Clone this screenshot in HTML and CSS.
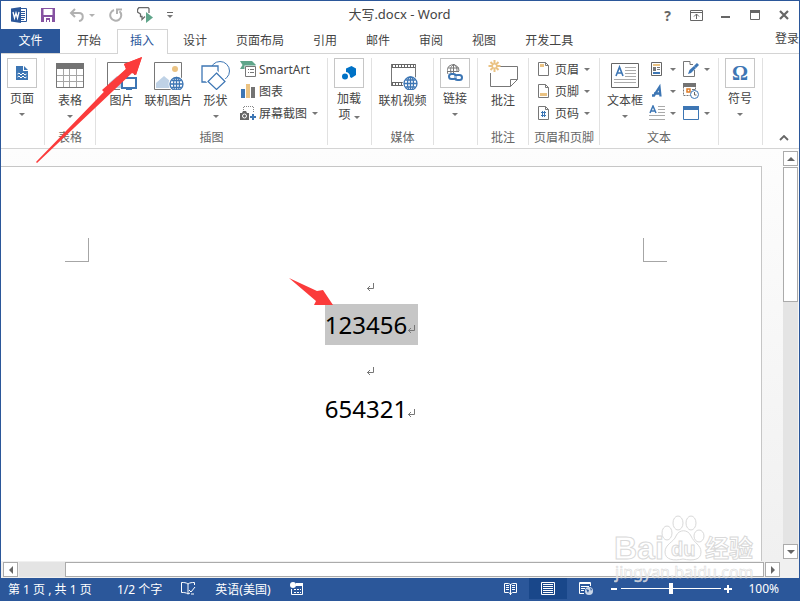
FILE: index.html
```html
<!DOCTYPE html>
<html lang="zh-CN">
<head>
  <meta charset="UTF-8" />
  <title>大写.docx - Word</title>
  <link rel="stylesheet" href="styles.css">
</head>
<body>
<div class="window">

  <header class="titlebar">
    <div class="quick-access">
      <svg class="word-logo" width="16" height="16" viewBox="0 0 16 16">
        <path d="M9 1.5h6.5v13H9z" fill="#fff" stroke="#2b579a"/>
        <path d="M10 4.5h4M10 6.5h4M10 8.5h4M10 10.5h4M10 12.5h3" stroke="#2b579a"/>
        <path d="M0 1.5L10 0v16L0 14.500z" fill="#2b579a"/>
        <path d="M2 5l1.500 6L5 6l1.500 5L8 5" fill="none" stroke="#fff" stroke-width="1.300"/>
      </svg>
      <button class="qat" aria-label="保存">
        <svg width="14" height="14" viewBox="0 0 14 14">
          <path d="M0 0h14v14H0z" fill="#8652a1"/>
          <path d="M2.500 1h9v6h-9zM3 9h8v5H3z" fill="#fff"/>
          <path d="M5 10h4v4H8v-2H6v2H5z" fill="#8652a1"/>
        </svg>
      </button>
      <button class="qat undo" aria-label="撤消">
        <svg width="16" height="14" viewBox="0 0 16 14">
          <path d="M2 5h8c5 0 5 7 0 8" fill="none" stroke="#b1b1b1" stroke-width="2"/>
          <path d="M6 1L2 5l4 4" fill="none" stroke="#b1b1b1" stroke-width="2"/>
        </svg>
        <span class="caret pale"></span>
      </button>
      <button class="qat" aria-label="重复">
        <svg width="14" height="14" viewBox="0 0 14 14">
          <path d="M5 2a5.500 5.500 0 1 0 5.500 1.200" fill="none" stroke="#b1b1b1" stroke-width="2"/>
          <path d="M8 6V1.500h5" fill="none" stroke="#b1b1b1" stroke-width="2"/>
        </svg>
      </button>
      <button class="qat" aria-label="触摸">
        <svg width="16" height="16" viewBox="0 0 16 16">
          <path d="M8 9.500l-3 3v-3H3.500v-2.500L.5 5V2.500l1.500-2h9l1 1V6" fill="none" stroke="#6a6a6a" stroke-width="1.300"/>
          <path d="M9 5l7 5.500L9 16z" fill="#5fa58a"/>
        </svg>
      </button>
      <button class="qat customize" aria-label="自定义快速访问工具栏">
        <span class="bar"></span><span class="caret"></span>
      </button>
    </div>
    <h1 class="doc-title">大写.docx - Word</h1>
    <div class="window-controls">
      <button aria-label="帮助" class="help">?</button>
      <button aria-label="功能区显示选项">
        <svg width="13" height="11" viewBox="0 0 13 11"><path d="M.5.5h12v10H.5zM0 2.500h13M6.500 9V4M4 6.500L6.500 4 9 6.500" fill="none" stroke="#666"/></svg>
      </button>
      <button aria-label="最小化">
        <svg width="10" height="10" viewBox="0 0 10 10"><path d="M0 6h9v2H0z" fill="#666"/></svg>
      </button>
      <button aria-label="最大化">
        <svg width="10" height="10" viewBox="0 0 10 10"><path d="M.5.500h9v9h-9z" fill="none" stroke="#666"/><path d="M0 0h10v3H0z" fill="#666"/></svg>
      </button>
      <button aria-label="关闭">
        <svg width="10" height="10" viewBox="0 0 10 10"><path d="M1 1l8 8M9 1L1 9" stroke="#666" stroke-width="2.200"/></svg>
      </button>
    </div>
  </header>

  <nav class="tabs">
    <a href="#" class="file-tab">文件</a>
    <a href="#" class="tab">开始</a>
    <a href="#" class="tab active">插入</a>
    <a href="#" class="tab">设计</a>
    <a href="#" class="tab">页面布局</a>
    <a href="#" class="tab">引用</a>
    <a href="#" class="tab">邮件</a>
    <a href="#" class="tab">审阅</a>
    <a href="#" class="tab">视图</a>
    <a href="#" class="tab">开发工具</a>
    <a href="#" class="login">登录</a>
  </nav>

  <section class="ribbon">
    <div class="group g-small">
      <div class="group-body">
        <button class="big">
          <span class="frame">
            <svg width="12" height="14" viewBox="0 0 12 14">
              <path d="M0 0h7v5h5v9H0zM8 0l4 4H8z" fill="#3d76b4"/>
              <path d="M1.500 8l1.500-1 2 2 2-2 2 2 1.500-1M1.500 11l1.500-1 2 2 2-2 2 2 1.500-1" fill="none" stroke="#fff"/>
            </svg>
          </span>
          <span>页面</span>
          <i class="caret"></i>
        </button>
      </div>
    </div>

    <div class="group g-medium">
      <div class="group-body">
        <button class="big">
          <svg class="icon" width="30" height="32" viewBox="0 0 30 32">
            <path d="M1 5h28v25H1z" fill="#fff"/>
            <path d="M1.500 12v17.500h27V12M1 17.500h28M1 23.500h28M8.500 11v19M14.500 11v19M21.500 11v19" fill="none" stroke="#a6a6a6"/>
            <path d="M1.500 5v24.500h27V5" fill="none" stroke="#777"/>
            <path d="M1 5h28v6H1z" fill="#737373"/>
          </svg>
          <span>表格</span>
          <i class="caret"></i>
        </button>
      </div>
      <div class="group-label">表格</div>
    </div>

    <div class="group g-illustrations">
      <div class="group-body">
        <button class="big">
          <svg class="icon" width="30" height="32" viewBox="0 0 30 32">
            <path d="M13 31.500H.5v-27h27V17" fill="#fff" stroke="#777"/>
            <path d="M2 30v-5l8-7 5 4v8z" fill="#bfd2e6"/>
            <path d="M15 20h14v10H15z" fill="#fff" stroke="#3d76b4" stroke-width="2"/>
            <path d="M22 30v2M19 32h6" stroke="#3d76b4" stroke-width="2"/>
          </svg>
          <span>图片</span>
        </button>
        <button class="big">
          <svg class="icon" width="30" height="32" viewBox="0 0 30 32">
            <path d="M.5 4.500h27v27H.5z" fill="#fff" stroke="#777"/>
            <circle cx="21" cy="11" r="3" fill="#eac282"/>
            <path d="M2 30v-5l8-7 6 5v7z" fill="#bfd2e6"/>
            <circle cx="22.500" cy="26" r="8" fill="#fff"/>
            <g fill="none" stroke="#3d76b4" stroke-width="1.300"><circle cx="22.500" cy="26" r="6.500"/><ellipse cx="22.500" cy="26" rx="3" ry="6.500"/><path d="M22.500 19.500v13M16 26h13M17.500 22.500h10M17.500 29.500h10"/></g>
          </svg>
          <span>联机图片</span>
        </button>
        <button class="big">
          <svg class="icon" width="30" height="32" viewBox="0 0 30 32">
            <circle cx="19" cy="13" r="9.500" fill="#fff" stroke="#3d76b4"/>
            <path d="M1 8h16v16H1z" fill="#fff" stroke="#3d76b4" stroke-width="1.300"/>
            <path d="M15.500 14l9 9-9 9-9-9z" fill="#fff" stroke="#fff" stroke-width="3"/>
            <path d="M15.500 15l8.500 8.500-8.500 8-8.500-8z" fill="#fff" stroke="#3d76b4" stroke-width="1.200"/>
          </svg>
          <span>形状</span>
          <i class="caret"></i>
        </button>
        <div class="rows">
          <button class="row">
            <svg width="16" height="16" viewBox="0 0 16 16">
              <path d="M0 0h12l4 4-3 4H0l2.500-4z" fill="#5fa58a"/>
              <path d="M5.500 5.500h10v10h-10z" fill="#fff" stroke="#fff" stroke-width="2"/>
              <path d="M5.500 5.500h10v10h-10z" fill="#fff" stroke="#777"/>
              <path d="M8 8.500h1M10 8.500h4M8 11.500h1M10 11.500h4" stroke="#777"/>
            </svg>
            SmartArt
          </button>
          <button class="row">
            <svg width="16" height="16" viewBox="0 0 16 16">
              <path d="M1 6h4v9H1z" fill="#3d76b4"/><path d="M6 1h4v14H6z" fill="#eac282"/><path d="M11 4h4v11h-4z" fill="#737373"/>
            </svg>
            图表
          </button>
          <button class="row">
            <svg width="16" height="16" viewBox="0 0 16 16">
              <path d="M3.500 5V1.500h10V8" fill="none" stroke="#888" stroke-dasharray="1 1"/>
              <path d="M0 8h2l1-2h3l1 2h2v7H0z" fill="#666"/>
              <circle cx="4.500" cy="11" r="2" fill="none" stroke="#fff"/>
              <path d="M13 9v6M10 12h6" stroke="#3d76b4" stroke-width="2"/>
            </svg>
            屏幕截图 <i class="caret"></i>
          </button>
        </div>
      </div>
      <div class="group-label">插图</div>
    </div>

    <div class="group g-small">
      <div class="group-body">
        <button class="big">
          <span class="frame">
            <svg width="14" height="16" viewBox="0 0 14 16">
              <path d="M4 3.500L9.500 1 14 3.500V10l-4.500 3-1.500-1a5 5 0 0 0-4-5z" fill="#0072c6"/>
              <circle cx="3" cy="11.500" r="3" fill="#0072c6"/>
            </svg>
          </span>
          <span>加载</span>
          <span>项 <i class="caret"></i></span>
        </button>
      </div>
    </div>

    <div class="group g-media">
      <div class="group-body">
        <button class="big">
          <svg class="icon" width="30" height="32" viewBox="0 0 30 32">
            <path d="M3 6h25v22H3z" fill="#fff"/>
            <path d="M3 6h25v4H3zM3 24h13v4H3z" fill="#666"/>
            <path d="M5 8h22M5 26h10" stroke="#fff" stroke-width="2" stroke-dasharray="2 1"/>
            <path d="M3.500 6v22M27.500 6v14" stroke="#777"/>
            <circle cx="22.500" cy="25.500" r="8" fill="#fff"/>
            <g fill="none" stroke="#3d76b4" stroke-width="1.300"><circle cx="22.500" cy="25.500" r="6.500"/><ellipse cx="22.500" cy="25.500" rx="3" ry="6.500"/><path d="M22.500 19v13M16 25.500h13M17.500 22h10M17.500 29h10"/></g>
          </svg>
          <span>联机视频</span>
        </button>
      </div>
      <div class="group-label">媒体</div>
    </div>

    <div class="group g-small">
      <div class="group-body">
        <button class="big">
          <span class="frame">
            <svg width="16" height="18" viewBox="0 0 16 18">
              <g fill="none" stroke="#777"><path d="M1 10a6 6 0 1 1 11-3M4 9c-1-5 0-7 3-8.500C9.500 2 10 4 10 7M6.500 0v9M1 4h11M0 7.500h12"/></g>
              <g fill="none" stroke="#3d76b4" stroke-width="2"><rect x="2" y="10" width="7" height="5" rx="2.500"/><rect x="8" y="11" width="7" height="5" rx="2.500"/></g>
              <path d="M6 13h5" stroke="#fff"/>
            </svg>
          </span>
          <span>链接</span>
          <i class="caret"></i>
        </button>
      </div>
    </div>

    <div class="group g-medium">
      <div class="group-body">
        <button class="big">
          <svg class="icon" width="32" height="32" viewBox="0 0 32 32">
            <path d="M13 8.500h17.500v13l-7 7h-20V15" fill="none" stroke="#777"/>
            <path d="M30.500 21.500h-7v7" fill="none" stroke="#777"/>
            <path d="M7.500 2v12M1.500 8h12M3.500 4l8 8M11.500 4l-8 8" stroke="#eac282" stroke-width="2"/>
            <circle cx="7.500" cy="8" r="1.500" fill="#fff"/>
          </svg>
          <span>批注</span>
        </button>
      </div>
      <div class="group-label">批注</div>
    </div>

    <div class="group g-header">
      <div class="group-body">
        <div class="rows">
          <button class="row">
            <svg width="12" height="14" viewBox="0 0 12 14"><path d="M.5.500h7l3 3v10H.5z" fill="#fff" stroke="#777"/><path d="M7.500.500v3h3" fill="none" stroke="#777"/><path d="M2 2h4v3H2z" fill="#eac282"/></svg>
            页眉 <i class="caret"></i>
          </button>
          <button class="row">
            <svg width="12" height="14" viewBox="0 0 12 14"><path d="M.5.500h7l3 3v10H.5z" fill="#fff" stroke="#777"/><path d="M7.500.500v3h3" fill="none" stroke="#777"/><path d="M2 9h7v3H2z" fill="#eac282"/></svg>
            页脚 <i class="caret"></i>
          </button>
          <button class="row">
            <svg width="12" height="14" viewBox="0 0 12 14"><path d="M.5.500h7l3 3v10H.5z" fill="#fff" stroke="#777"/><path d="M7.500.500v3h3" fill="none" stroke="#777"/><path d="M4.500 5v6M6.500 5v6M3 6.500h5M3 9.500h5" stroke="#3d76b4"/></svg>
            页码 <i class="caret"></i>
          </button>
        </div>
      </div>
      <div class="group-label">页眉和页脚</div>
    </div>

    <div class="group g-text">
      <div class="group-body">
        <button class="big">
          <svg class="icon" width="28" height="32" viewBox="0 0 28 32">
            <path d="M.5 5.500h27v24H.5z" fill="#fff" stroke="#666"/>
            <path d="M5 18l3.500-9L12 18M6 15h5" fill="none" stroke="#3d76b4" stroke-width="1.600"/>
            <path d="M14 9.500h11M14 12.500h11M14 15.500h11M14 18.500h11M3 21.500h22M3 24.500h22" stroke="#aaa"/>
          </svg>
          <span>文本框</span>
          <i class="caret"></i>
        </button>
        <div class="rows narrow">
          <button class="row" aria-label="文档部件">
            <svg width="16" height="16" viewBox="0 0 16 16"><path d="M2.500 1.500h10v13h-10z" fill="#fff" stroke="#666"/><path d="M4 3h7v2H4z" fill="#eac282"/><path d="M4 6h3v4H4z" fill="#777"/><path d="M8 6.500h3M8 8.500h3" stroke="#777"/><path d="M4 11h7v2H4z" fill="#3d76b4"/></svg>
            <i class="caret"></i>
          </button>
          <button class="row" aria-label="艺术字">
            <svg width="16" height="16" viewBox="0 0 16 16"><path d="M3 12.500h2L10.500 4l1 9.500M5 10.500h6" fill="none" stroke="#3d76b4" stroke-width="2.300"/></svg>
            <i class="caret"></i>
          </button>
          <button class="row" aria-label="首字下沉">
            <svg width="16" height="16" viewBox="0 0 16 16"><path d="M1 8l3-7 3 7M2 6h4" fill="none" stroke="#3d76b4" stroke-width="1.500"/><path d="M9 1.500h7M9 4.500h7M9 7.500h7M0 10.500h16M0 14.500h16" stroke="#aaa"/></svg>
            <i class="caret"></i>
          </button>
        </div>
        <div class="rows narrow">
          <button class="row" aria-label="签名行">
            <svg width="16" height="16" viewBox="0 0 16 16"><path d="M7 .5H.5v15h11V9M7 .500v3h3" fill="none" stroke="#777"/><path d="M5 13l1.500-4 4.500-4 2 2-5 5z" fill="#3d76b4"/><path d="M12 6l3-3" stroke="#3d76b4" stroke-width="3"/></svg>
            <i class="caret"></i>
          </button>
          <button class="row" aria-label="日期和时间">
            <svg width="16" height="16" viewBox="0 0 16 16"><path d="M.5 1.500h12v11H.5z" fill="#fff" stroke="#777" stroke-dasharray="2 1"/><path d="M0 0h13v4H0z" fill="#737373"/><path d="M4 6h3v3H4z" fill="#fff" stroke="#e07b24" stroke-width="1.500"/><path d="M9 6.500h3" stroke="#777"/><circle cx="11.500" cy="11.500" r="4" fill="#fff" stroke="#3d76b4"/><path d="M11.500 9v3h2" fill="none" stroke="#666"/></svg>
          </button>
          <button class="row" aria-label="对象">
            <svg width="16" height="16" viewBox="0 0 16 16"><path d="M.5 1.500h15v13H.5z" fill="#fff" stroke="#3d76b4"/><path d="M0 1h16v4H0z" fill="#3d76b4"/></svg>
            <i class="caret"></i>
          </button>
        </div>
      </div>
      <div class="group-label">文本</div>
    </div>

    <div class="group g-small">
      <div class="group-body">
        <button class="big">
          <span class="frame omega">Ω</span>
          <span>符号</span>
          <i class="caret"></i>
        </button>
      </div>
    </div>

    <button class="collapse" aria-label="折叠功能区">
      <svg width="10" height="6" viewBox="0 0 10 6"><path d="M1 5l4-4 4 4" fill="none" stroke="#666" stroke-width="1.800"/></svg>
    </button>
  </section>

  <main class="workspace">
    <div class="canvas">
      <article class="page">
        <div class="margin-marks"><span class="mark-left"></span><span class="mark-right"></span></div>
        <p><svg class="pilcrow" width="11" height="9" viewBox="0 0 11 9"><path d="M7.500 0v5.500H1M4 3L1.500 5.500 4 8" fill="none" stroke="#777"/></svg></p>
        <p><span class="selected">123456<svg class="pilcrow" width="11" height="9" viewBox="0 0 11 9"><path d="M7.500 0v5.500H1M4 3L1.500 5.500 4 8" fill="none" stroke="#777"/></svg></span></p>
        <p><svg class="pilcrow" width="11" height="9" viewBox="0 0 11 9"><path d="M7.500 0v5.500H1M4 3L1.500 5.500 4 8" fill="none" stroke="#777"/></svg></p>
        <p>654321<svg class="pilcrow" width="11" height="9" viewBox="0 0 11 9"><path d="M7.500 0v5.500H1M4 3L1.500 5.500 4 8" fill="none" stroke="#777"/></svg></p>
      </article>
    </div>
    <div class="vscroll">
      <button class="scroll-btn" aria-label="向上滚动"><i class="caret up"></i></button>
      <div class="vthumb"></div>
      <div class="vtrack"></div>
      <button class="scroll-btn" aria-label="向下滚动"><i class="caret down"></i></button>
    </div>
  </main>

  <div class="hscroll">
    <button class="scroll-btn" aria-label="向左滚动"><i class="caret left"></i></button>
    <div class="htrack"></div>
    <div class="hthumb"></div>
    <button class="scroll-btn" aria-label="向右滚动"><i class="caret right"></i></button>
  </div>

  <svg class="arrow arrow-tab" width="108" height="108" viewBox="0 0 108 108">
    <path d="M106 1l-6 18-4-2L1 107l-1-1L90 13l-2-5z" fill="#fb3b3b"/>
    <path d="M106 1l-6 18-5-4-24 24-5-5L90 13l-2-5z" fill="#fb3b3b"/>
  </svg>
  <svg class="arrow arrow-text" width="46" height="28" viewBox="0 0 46 28">
    <path d="M0 0l28 13 6-1 10 15H25l2-4z" fill="#fb3b3b"/>
  </svg>

  <footer class="statusbar">
    <span class="page-count">第 1 页 , 共 1 页</span>
    <span>1/2 个字</span>
    <svg width="15" height="13" viewBox="0 0 15 13"><path d="M7 2v10M7 2C5 .5 3 .5.500.500v10C3 10.500 5 10.500 7 12l2-1M7 2C9 .5 11 .5 13.500.500V3M8 8l2 2 4-5M10 12h3" fill="none" stroke="#fff"/></svg>
    <span>英语(美国)</span>
    <svg class="macro" width="13" height="14" viewBox="0 0 13 14"><path d="M6 1h7v3H6z" fill="#fff"/><path d="M1.500 7v5.500h11V4" fill="none" stroke="#fff"/><path d="M4 7.500h7M4 10.500h7" stroke="#fff" stroke-dasharray="2 1"/><circle cx="3" cy="3" r="3" fill="#fff"/></svg>

    <div class="views">
      <button aria-label="阅读视图">
        <svg width="13" height="13" viewBox="0 0 13 13"><path d="M6.500 2v11M.5 1.500h4l2 1 2-1h4v9h-4l-2 1.500-2-1.500h-4zM2 3.500h3M2 5.500h3M2 7.500h3M8 3.500h3M8 5.500h3M8 7.500h3" fill="none" stroke="#fff"/></svg>
      </button>
      <button class="current" aria-label="页面视图">
        <svg width="14" height="13" viewBox="0 0 14 13"><path d="M.5.500h13v12H.5zM2 2.500h10M2 4.500h10M2 6.500h10M2 8.500h10M2 10.500h10" fill="none" stroke="#fff"/></svg>
      </button>
      <button aria-label="Web 版式视图">
        <svg width="14" height="13" viewBox="0 0 14 13"><path d="M5 11.500H.5V.500h11V4M0 1.500h12M2 4.500h8M2 6.500h4M2 8.500h3" fill="none" stroke="#fff"/><circle cx="10" cy="9" r="4" fill="#c9d6e8"/><path d="M7 7l3 1-1 3zM11 6l2 1-1 2z" fill="#2b579a"/></svg>
      </button>
    </div>
    <div class="zoom">
      <button aria-label="缩小"><svg width="8" height="8" viewBox="0 0 8 8"><path d="M1 4h6" stroke="#fff" stroke-width="2"/></svg></button>
      <input type="range" min="0" max="100" value="50" aria-label="缩放级别">
      <button aria-label="放大"><svg width="8" height="8" viewBox="0 0 8 8"><path d="M0 4h8M4 0v8" stroke="#fff" stroke-width="2"/></svg></button>
      <span class="percent">100%</span>
    </div>
  </footer>

  <svg class="watermark" width="146" height="72" viewBox="0 0 146 72">
    <g class="wm-outline">
      <text x="0" y="46" class="wm-latin">Bai</text>
      <path d="M51 39c0-8 9-10 11-16 3-7 12-7 15 0 3 7 10 9 10 16 0 8-8 9-18 7-9 2-18 1-18-7z"/>
      <ellipse cx="53" cy="20" rx="5" ry="7"/>
      <ellipse cx="64" cy="10" rx="5" ry="7"/>
      <ellipse cx="77" cy="10" rx="5" ry="7"/>
      <ellipse cx="85" cy="23" rx="5" ry="6"/>
      <text x="57" y="43" class="wm-du">du</text>
      <text x="91" y="44" class="wm-cjk">经验</text>
    </g>
    <text x="1" y="65" class="wm-url">jingyan.baidu.com</text>
  </svg>

</div>
</body>
</html>
```

FILE: styles.css
```css
* {
  box-sizing: border-box;
}

body {
  margin: 0;
  font-family: "Noto Sans", "Noto Sans CJK SC", sans-serif;
  font-size: 12px;
  color: #444;
  background: #fff;
}

button {
  font: inherit;
  color: inherit;
  background: none;
  border: none;
  padding: 0;
}

a {
  color: inherit;
  text-decoration: none;
}

svg {
  flex: none;
}

.window {
  position: relative;
  display: flex;
  flex-direction: column;
  height: 100vh;
  border: 1px solid #2b579a;
  border-bottom: none;
  overflow: hidden;
}

/* small drop-down triangle */
.caret {
  display: inline-block;
  flex: none;
  border: 3px solid transparent;
  border-top-color: #777;
  border-bottom: none;
}

.caret.pale {
  border-top-color: #b1b1b1;
}

/* title bar */
.titlebar {
  display: grid;
  grid-template-columns: 1fr auto 1fr;
  align-items: center;
  height: 28px;
  padding-right: 1px;
}

.quick-access {
  display: flex;
  align-items: center;
  gap: 14px;
  padding-left: 10px;
}

.qat {
  display: flex;
  align-items: center;
}

.undo {
  gap: 4px;
}

.customize {
  flex-direction: column;
  gap: 2px;
}

.customize .bar {
  width: 6px;
  height: 1px;
  background: #666;
}

.doc-title {
  height: 28px;
  margin: 0;
  font-size: 13px;
  font-weight: normal;
  line-height: 26px;
}

.window-controls {
  display: flex;
  justify-content: flex-end;
}

.window-controls button {
  display: flex;
  align-items: center;
  justify-content: center;
  width: 29px;
  height: 28px;
}

.window-controls .help {
  font-size: 14px;
  font-weight: bold;
  color: #666;
}

/* tabs */
.tabs {
  display: flex;
  gap: 2px;
  height: 25px;
  border-bottom: 1px solid #d4d4d4;
  line-height: 24px;
  white-space: nowrap;
}

.file-tab {
  width: 59px;
  margin-right: 2px;
  background: #2b579a;
  color: #fff;
  text-align: center;
}

.tab {
  height: 25px;
  padding: 0 13px 0 12px;
  border: 1px solid transparent;
  border-bottom: none;
  line-height: 22px;
}

.tab.active {
  border-color: #d4d4d4;
  background: #fff;
  color: #2b579a;
}

.login {
  margin-left: auto;
  line-height: 20px;
}

/* ribbon */
.ribbon {
  display: flex;
  height: 95px;
  padding: 4px 0 3px;
  border-bottom: 1px solid #d4d4d4;
  white-space: nowrap;
}

.group {
  display: flex;
  flex-direction: column;
  flex: none;
  border-right: 1px solid #e1e1e1;
}

.g-small {
  width: 44px;
}

.g-medium {
  width: 51px;
}

.g-illustrations {
  width: 232px;
}

.g-media {
  width: 62px;
}

.g-header {
  width: 71px;
}

.g-text {
  width: 119px;
}

.group-body {
  display: flex;
  justify-content: center;
  flex: 1;
}

.g-small .group-body {
  padding-right: 1px;
}

.g-illustrations .group-body {
  justify-content: flex-start;
  padding-left: 2px;
}

.group-label {
  height: 14px;
  line-height: 14px;
  text-align: center;
  color: #666;
}

.big {
  display: flex;
  flex-direction: column;
  align-items: center;
  width: 47px;
  line-height: 16px;
}

.big > .icon,
.big > .frame {
  margin-bottom: 3px;
}

.big > .caret {
  margin-top: 6px;
}

.frame {
  display: flex;
  align-items: center;
  justify-content: center;
  flex: none;
  width: 30px;
  height: 30px;
  border: 1px solid #c6c6c6;
}

.omega {
  font-family: "Liberation Serif", serif;
  font-size: 20px;
  font-weight: bold;
  color: #3d76b4;
}

.g-illustrations .rows {
  margin-left: 1px;
}

.row {
  display: flex;
  align-items: center;
  gap: 3px;
  height: 22px;
}

.row .caret {
  margin-left: 2px;
}

.g-header .row {
  gap: 5px;
}

.g-header .row .caret {
  margin-left: 0;
}

.narrow {
  width: 34px;
}

.collapse {
  align-self: flex-end;
  margin: 0 10px 0 auto;
}

/* document */
.workspace {
  display: flex;
  flex: 1;
  min-height: 0;
  background: linear-gradient(#fdfdfd, #f0f0f0);
}

.canvas {
  display: flex;
  flex: 1;
  padding: 17px 20px 0 0;
}

.page {
  flex: 1;
  padding-top: 71px;
  border-top: 1px solid #c6c6c6;
  border-right: 1px solid #c6c6c6;
  background: #fff;
  font-size: 24px;
  color: #000;
}

.margin-marks {
  display: flex;
  justify-content: space-between;
  padding: 0 94px 0 64px;
}

.margin-marks span {
  width: 24px;
  height: 24px;
  border-bottom: 1px solid #a6a6a6;
}

.mark-left {
  border-right: 1px solid #a6a6a6;
}

.mark-right {
  border-left: 1px solid #a6a6a6;
}

.page p {
  height: 42px;
  margin: 0;
  padding-right: 30px;
  line-height: 41px;
  text-align: center;
}

.pilcrow {
  margin-right: -11px;
}

.selected {
  display: inline-block;
  height: 41px;
  margin-right: -11px;
  background: #c6c6c6;
}

.selected .pilcrow {
  margin-right: 0;
}

/* scroll bars */
.scroll-btn {
  display: flex;
  align-items: center;
  justify-content: center;
  flex: none;
  width: 15px;
  height: 15px;
  border: 1px solid #ababab;
  background: #fff;
}

.scroll-btn .caret {
  border: 4px solid transparent;
}

.scroll-btn .up {
  border-top: none;
  border-bottom-color: #666;
}

.scroll-btn .down {
  border-bottom: none;
  border-top-color: #666;
}

.scroll-btn .left {
  border-left: none;
  border-right-color: #666;
}

.scroll-btn .right {
  border-right: none;
  border-left-color: #666;
}

.vscroll {
  display: flex;
  flex-direction: column;
  padding: 2px 1px;
}

.vthumb {
  flex: 134;
  margin-top: 1px;
  border: 1px solid #ababab;
  background: #fff;
}

.vtrack {
  flex: 243;
  background: #e4e4e4;
}

.hscroll {
  display: flex;
  gap: 1px;
  height: 17px;
  padding: 1px 19px 1px 2px;
  background: #f0f0f0;
}

.htrack {
  flex: 46;
  margin-right: -1px;
  background: #e4e4e4;
}

.hthumb {
  flex: 699;
  border: 1px solid #ababab;
  background: #fff;
}

/* status bar */
.statusbar {
  display: flex;
  align-items: center;
  gap: 19px;
  height: 23px;
  margin: 0 -1px;
  padding: 0 21px 2px 8px;
  background: #2b579a;
  color: #fff;
  white-space: nowrap;
}

.page-count {
  min-width: 90px;
}

.views {
  display: flex;
  height: 21px;
  margin-left: auto;
}

.views button {
  display: flex;
  align-items: center;
  justify-content: center;
  width: 38px;
}

.views .current {
  background: #19478a;
}

.zoom {
  display: flex;
  align-items: center;
  gap: 3px;
  margin-left: -14px;
}

.zoom button {
  display: flex;
}

.zoom input {
  width: 100px;
  height: 12px;
  margin: 0;
  background: linear-gradient(#fff, #fff) center / 100% 1px no-repeat;
  appearance: none;
}

.zoom input::-webkit-slider-thumb {
  width: 4px;
  height: 11px;
  background: #fff;
  appearance: none;
}

.percent {
  margin-left: 13px;
}

/* overlays */
.arrow {
  position: absolute;
}

.arrow-tab {
  left: 35px;
  top: 55px;
}

.arrow-text {
  left: 288px;
  top: 277px;
}

.watermark {
  position: absolute;
  right: 39px;
  bottom: 16px;
}

.wm-outline {
  fill: #fff;
  stroke: #d9d9d9;
  stroke-width: 1px;
}

.wm-latin {
  font: bold 32px "Liberation Sans", sans-serif;
}

.wm-du {
  font: bold 20px "Liberation Sans", sans-serif;
}

.wm-cjk {
  font: bold 24px "Noto Sans CJK SC", sans-serif;
}

.wm-url {
  font: 16px "Noto Sans", sans-serif;
  fill: #fff;
  fill-opacity: 0.7;
  stroke: #d4d4d4;
  stroke-width: 0.5px;
}
```
